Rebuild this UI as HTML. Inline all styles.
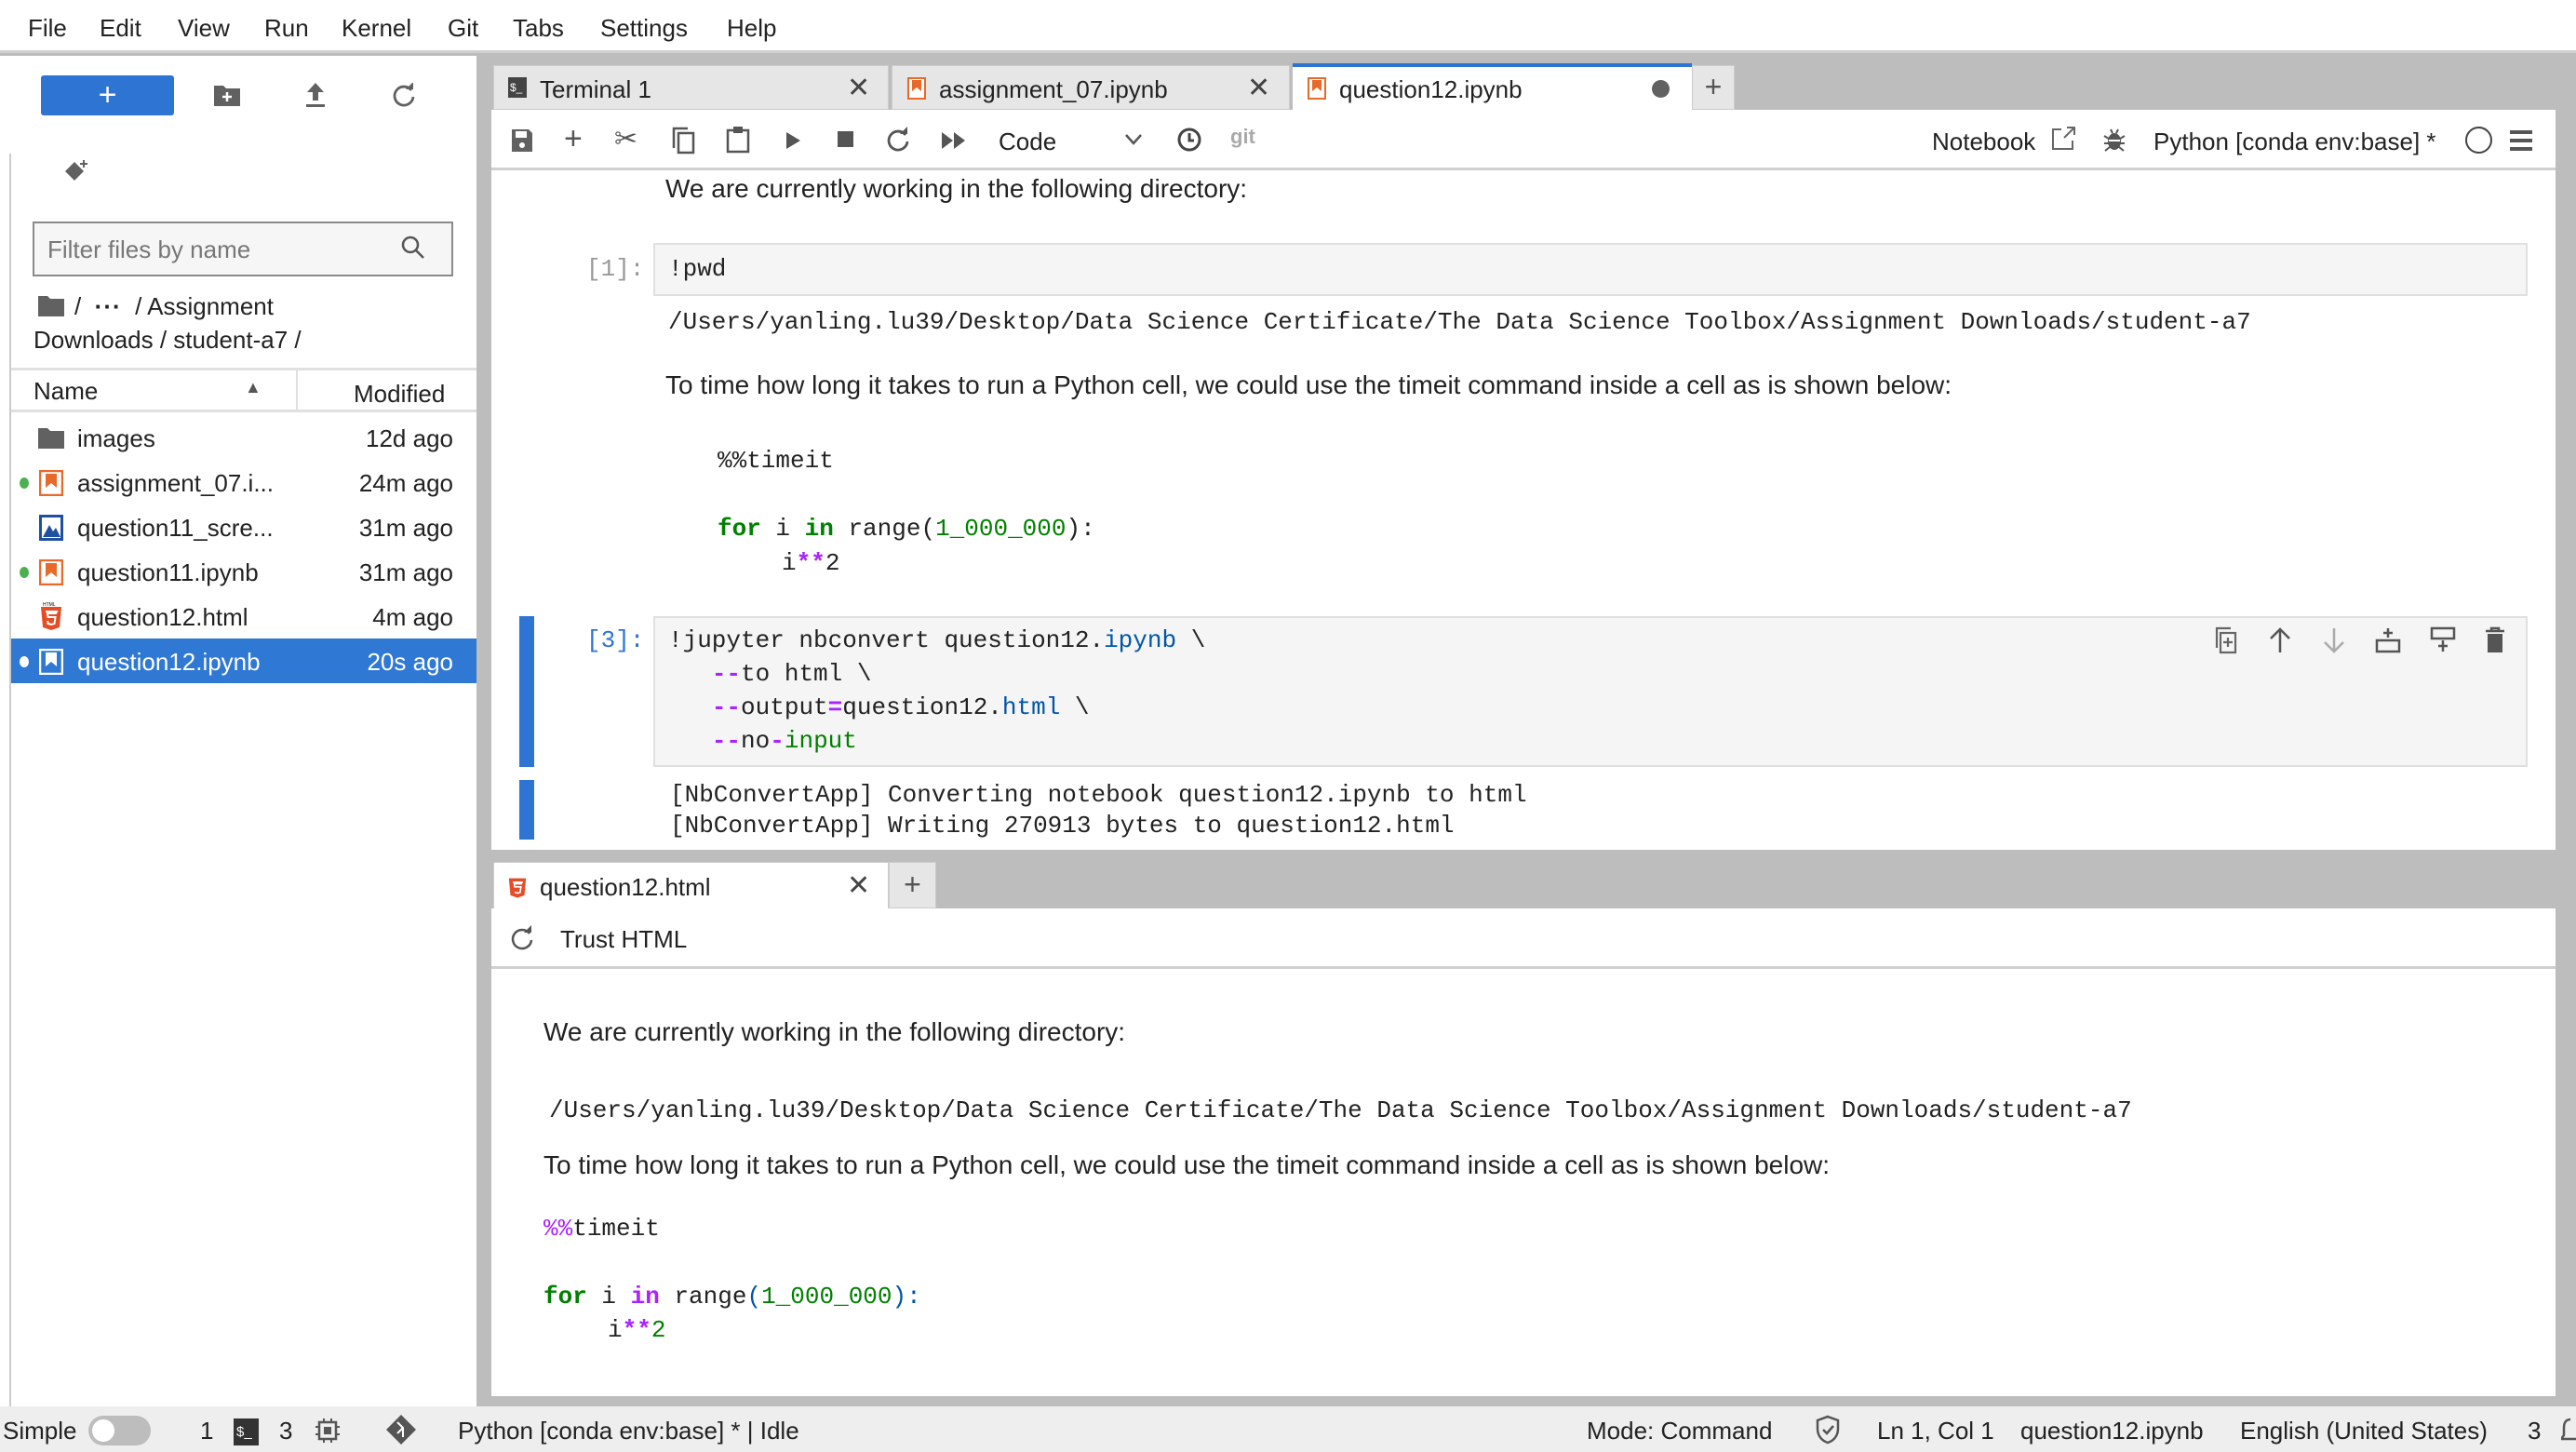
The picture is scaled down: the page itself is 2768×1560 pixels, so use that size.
<!DOCTYPE html>
<html><head><meta charset="utf-8"><style>
*{margin:0;padding:0;box-sizing:border-box}
body{width:2768px;height:1560px;position:relative;overflow:hidden;background:#bdbdbd;font-family:"Liberation Sans",sans-serif;font-size:26px;color:#222}
.a{position:absolute;white-space:nowrap}
.t{position:absolute;left:287px;width:200px;text-align:right;white-space:nowrap}
.m{font-family:"Liberation Mono",monospace;font-size:26px}
.kw{color:#008000;font-weight:bold}.op{color:#aa22ff;font-weight:bold}.nu{color:#008000}.bl{color:#0055aa}
.ic{position:absolute}
</style></head><body>
<!-- menubar -->
<div class="a" style="left:0;top:0;width:2768px;height:57px;background:#fff;border-bottom:3px solid #d0d0d0"></div>
<div class="a" style="left:30px;top:15px;word-spacing:0">File</div>
<div class="a" style="left:107px;top:15px">Edit</div>
<div class="a" style="left:191px;top:15px">View</div>
<div class="a" style="left:284px;top:15px">Run</div>
<div class="a" style="left:367px;top:15px">Kernel</div>
<div class="a" style="left:481px;top:15px">Git</div>
<div class="a" style="left:551px;top:15px">Tabs</div>
<div class="a" style="left:645px;top:15px">Settings</div>
<div class="a" style="left:781px;top:15px">Help</div>

<!-- sidebar -->
<div class="a" style="left:0;top:60px;width:512px;height:1451px;background:#fff"></div>
<div class="a" style="left:10px;top:165px;width:2px;height:1346px;background:#ccc"></div>
<div class="a" style="left:44px;top:81px;width:143px;height:43px;background:#2e74d2;border-radius:3px;color:#fff;font-size:34px;text-align:center;line-height:42px">+</div>
<svg class="ic" style="left:230px;top:90px" width="28" height="24" viewBox="0 0 28 24"><path d="M0 2h10l3 3h15v19H0z" fill="#616161"/><path d="M14 9v10M9 14h10" stroke="#fff" stroke-width="2.5"/></svg>
<svg class="ic" style="left:327px;top:88px" width="24" height="28" viewBox="0 0 24 28"><path d="M12 1L3 11h6v9h6v-9h6z M2 24h20v3H2z" fill="#616161"/></svg>
<svg class="ic" style="left:421px;top:89px" width="26" height="26" viewBox="0 0 26 26"><path d="M21 8A10 10 0 1 0 23 15" fill="none" stroke="#616161" stroke-width="2.8"/><path d="M15 7h8V-1z" fill="#616161"/></svg>
<svg class="ic" style="left:68px;top:170px" width="30" height="30" viewBox="0 0 30 30"><path d="M12 4l10 10-10 10L2 14z" fill="#616161"/><path d="M22 2v8M18 6h8" stroke="#616161" stroke-width="2"/></svg>
<div class="a" style="left:35px;top:238px;width:452px;height:59px;border:2px solid #8a8a8a;background:#f6f6f6"></div>
<div class="a" style="left:51px;top:253px;color:#777">Filter files by name</div>
<svg class="ic" style="left:429px;top:251px" width="30" height="30" viewBox="0 0 30 30"><circle cx="12" cy="12" r="8" fill="none" stroke="#555" stroke-width="2.5"/><path d="M18 18l8 8" stroke="#555" stroke-width="2.5"/></svg>
<svg class="ic" style="left:41px;top:316px" width="28" height="24" viewBox="0 0 28 24"><path d="M0 2h10l3 3h15v19H0z" fill="#616161"/></svg>
<div class="a" style="left:80px;top:314px">/ &nbsp;<b style="letter-spacing:1px">···</b> &nbsp;/ Assignment</div>
<div class="a" style="left:36px;top:350px">Downloads / student-a7 /</div>
<div class="a" style="left:12px;top:395px;width:500px;height:48px;border-top:3px solid #e0e0e0;border-bottom:3px solid #e0e0e0"></div>
<div class="a" style="left:318px;top:398px;width:2px;height:42px;background:#e0e0e0"></div>
<div class="a" style="left:36px;top:405px;font-weight:500">Name</div>
<div class="a" style="left:263px;top:406px;font-size:18px;color:#555">▲</div>
<div class="a" style="left:380px;top:408px">Modified</div>
<div class="a" style="left:12px;top:686px;width:500px;height:48px;background:#2f78d3"></div>
<!-- rows -->
<svg class="ic" style="left:41px;top:458px" width="28" height="24" viewBox="0 0 28 24"><path d="M0 2h10l3 3h15v19H0z" fill="#616161"/></svg>
<div class="a" style="left:83px;top:456px">images</div><div class="t" style="top:456px">12d ago</div>
<div class="a" style="left:21px;top:513px;width:10px;height:12px;border-radius:50%;background:#4caf50"></div>
<svg class="ic" style="left:42px;top:505px" width="26" height="28" viewBox="0 0 26 28"><rect x="1" y="1" width="24" height="26" fill="#fff" stroke="#e86a2a" stroke-width="2.5"/><path d="M7 4h12v15l-6-5-6 5z" fill="#e86a2a"/></svg>
<div class="a" style="left:83px;top:504px">assignment_07.i...</div><div class="t" style="top:504px">24m ago</div>
<svg class="ic" style="left:42px;top:553px" width="26" height="28" viewBox="0 0 26 28"><rect x="0" y="0" width="26" height="28" fill="#1f4fa0"/><rect x="3" y="3" width="20" height="22" fill="#fff"/><path d="M4 24l7-13 4 7 3-4 5 10z" fill="#1f4fa0"/></svg>
<div class="a" style="left:83px;top:552px">question11_scre...</div><div class="t" style="top:552px">31m ago</div>
<div class="a" style="left:21px;top:609px;width:10px;height:12px;border-radius:50%;background:#4caf50"></div>
<svg class="ic" style="left:42px;top:601px" width="26" height="28" viewBox="0 0 26 28"><rect x="1" y="1" width="24" height="26" fill="#fff" stroke="#e86a2a" stroke-width="2.5"/><path d="M7 4h12v15l-6-5-6 5z" fill="#e86a2a"/></svg>
<div class="a" style="left:83px;top:600px">question11.ipynb</div><div class="t" style="top:600px">31m ago</div>
<svg class="ic" style="left:43px;top:646px" width="24" height="32" viewBox="0 0 24 32"><path d="M1 6h22l-2 22-9 3-9-3z" fill="#e44d26"/><path d="M6 11h12l-1 2H8l.5 4h8l-1 7-3.5 1-3.5-1-.2-3" fill="none" stroke="#fff" stroke-width="2"/><text x="3" y="5" font-size="5" font-family="Liberation Sans">HTML</text></svg>
<div class="a" style="left:83px;top:648px">question12.html</div><div class="t" style="top:648px">4m ago</div>
<div class="a" style="left:21px;top:705px;width:10px;height:12px;border-radius:50%;background:#fff"></div>
<svg class="ic" style="left:42px;top:697px" width="26" height="28" viewBox="0 0 26 28"><rect x="1" y="1" width="24" height="26" fill="none" stroke="#fff" stroke-width="2.5"/><path d="M7 4h12v15l-6-5-6 5z" fill="#fff"/></svg>
<div class="a" style="left:83px;top:696px;color:#fff">question12.ipynb</div><div class="t" style="top:696px;color:#fff">20s ago</div>

<!-- main tabs -->
<div class="a" style="left:530px;top:70px;width:425px;height:48px;background:#e6e6e6;border:1px solid #ccc"></div>
<div class="a" style="left:958px;top:70px;width:428px;height:48px;background:#e6e6e6;border:1px solid #ccc"></div>
<div class="a" style="left:1389px;top:68px;width:429px;height:52px;background:#fff;border-top:4px solid #2e74d2"></div>
<div class="a" style="left:1818px;top:70px;width:46px;height:48px;background:#e6e6e6;border:1px solid #ccc;text-align:center;line-height:44px;font-size:32px;color:#555">+</div>
<div class="a" style="left:546px;top:83px;width:20px;height:22px;background:#444;color:#fff;font-size:12px;line-height:22px;padding-left:2px">$_</div>
<div class="a" style="left:580px;top:81px">Terminal 1</div>
<div class="a" style="left:910px;top:77px;font-size:30px;color:#444">✕</div>
<svg class="ic" style="left:975px;top:83px" width="20" height="24" viewBox="0 0 20 24"><rect x="1" y="1" width="18" height="22" fill="#fff" stroke="#e86a2a" stroke-width="2"/><path d="M5 3h10v12l-5-4-5 4z" fill="#e86a2a"/></svg>
<div class="a" style="left:1009px;top:81px">assignment_07.ipynb</div>
<div class="a" style="left:1340px;top:77px;font-size:30px;color:#444">✕</div>
<svg class="ic" style="left:1405px;top:83px" width="20" height="24" viewBox="0 0 20 24"><rect x="1" y="1" width="18" height="22" fill="#fff" stroke="#e86a2a" stroke-width="2"/><path d="M5 3h10v12l-5-4-5 4z" fill="#e86a2a"/></svg>
<div class="a" style="left:1439px;top:81px">question12.ipynb</div>
<div class="a" style="left:1775px;top:86px;width:19px;height:19px;border-radius:50%;background:#616161"></div>

<!-- notebook panel -->
<div class="a" style="left:528px;top:118px;width:2218px;height:795px;background:#fff"></div>
<div class="a" style="left:528px;top:180px;width:2218px;height:3px;background:#d0d0d0"></div>
<svg class="ic" style="left:548px;top:137px" width="26" height="28" viewBox="0 0 26 28"><path d="M2 2h18l4 4v20H2z" fill="#616161"/><rect x="6" y="4" width="12" height="7" fill="#fff"/><circle cx="13" cy="19" r="3" fill="#fff"/></svg>
<div class="a" style="left:606px;top:130px;font-size:34px;color:#555">+</div>
<div class="a" style="left:660px;top:132px;font-size:30px;color:#555">✂</div>
<svg class="ic" style="left:720px;top:136px" width="28" height="30" viewBox="0 0 28 30"><rect x="9" y="7" width="16" height="21" fill="none" stroke="#555" stroke-width="2.5"/><path d="M4 23V2h15" fill="none" stroke="#555" stroke-width="2.5"/></svg>
<svg class="ic" style="left:780px;top:135px" width="26" height="30" viewBox="0 0 26 30"><rect x="2" y="5" width="22" height="23" fill="none" stroke="#555" stroke-width="2.5"/><rect x="8" y="1" width="10" height="7" fill="#555"/></svg>
<svg class="ic" style="left:842px;top:140px" width="20" height="22"><path d="M3 2l15 9-15 9z" fill="#555"/></svg>
<div class="a" style="left:900px;top:141px;width:17px;height:17px;background:#555"></div>
<svg class="ic" style="left:952px;top:136px" width="26" height="28" viewBox="0 0 26 28"><path d="M21 9A10 10 0 1 0 23 16" fill="none" stroke="#555" stroke-width="2.8"/><path d="M15 8h8V0z" fill="#555"/></svg>
<svg class="ic" style="left:1010px;top:140px" width="30" height="22"><path d="M2 2l12 9-12 9zM15 2l12 9-12 9z" fill="#555"/></svg>
<div class="a" style="left:1073px;top:137px">Code</div>
<svg class="ic" style="left:1208px;top:143px" width="20" height="14"><path d="M2 2l8 9 8-9" fill="none" stroke="#555" stroke-width="2.5"/></svg>
<svg class="ic" style="left:1264px;top:135px" width="28" height="30" viewBox="0 0 28 30"><circle cx="14" cy="15" r="11" fill="none" stroke="#444" stroke-width="3"/><path d="M14 8v8h5" fill="none" stroke="#444" stroke-width="3"/></svg>
<div class="a" style="left:1322px;top:134px;font-size:22px;color:#aaa;font-weight:bold">git</div>
<div class="a" style="left:2076px;top:137px">Notebook</div>
<svg class="ic" style="left:2203px;top:135px" width="28" height="28" viewBox="0 0 28 28"><path d="M12 4H3v21h21v-9" fill="none" stroke="#666" stroke-width="2"/><path d="M15 13L26 2M18 2h8v8" fill="none" stroke="#666" stroke-width="2"/></svg>
<svg class="ic" style="left:2260px;top:136px" width="24" height="28" viewBox="0 0 24 28"><ellipse cx="12" cy="16" rx="7" ry="9" fill="#555"/><path d="M1 10l5 3M23 10l-5 3M1 18h5M23 18h-5M2 26l5-4M22 26l-5-4M8 3l2 4M16 3l-2 4" stroke="#555" stroke-width="2"/><path d="M6 15h12" stroke="#fff" stroke-width="2"/></svg>
<div class="a" style="left:2314px;top:137px">Python [conda env:base] *</div>
<div class="a" style="left:2649px;top:136px;width:29px;height:29px;border:2.5px solid #444;border-radius:50%"></div>
<svg class="ic" style="left:2697px;top:139px" width="24" height="24"><path d="M0 3h24M0 12h24M0 21h24" stroke="#555" stroke-width="4"/></svg>

<div class="a" style="left:715px;top:187px;font-size:28px">We are currently working in the following directory:</div>
<div class="a m" style="left:630px;top:274px;color:#999">[1]:</div>
<div class="a" style="left:702px;top:261px;width:2014px;height:57px;background:#f5f5f5;border:2px solid #e0e0e0"></div>
<div class="a m" style="left:718px;top:274px">!pwd</div>
<div class="a m" style="left:718px;top:331px">/Users/yanling.lu39/Desktop/Data Science Certificate/The Data Science Toolbox/Assignment Downloads/student-a7</div>
<div class="a" style="left:715px;top:398px;font-size:28px">To time how long it takes to run a Python cell, we could use the timeit command inside a cell as is shown below:</div>
<div class="a m" style="left:771px;top:480px">%%timeit</div>
<div class="a m" style="left:771px;top:553px"><span class="kw">for</span> i <span class="kw">in</span> range(<span class="nu">1_000_000</span>):</div>
<div class="a m" style="left:840px;top:590px">i<span class="op">**</span>2</div>

<div class="a" style="left:558px;top:662px;width:16px;height:162px;background:#2e74d2"></div>
<div class="a" style="left:558px;top:838px;width:16px;height:64px;background:#2e74d2"></div>
<div class="a m" style="left:630px;top:673px;color:#2e74d2">[3]:</div>
<div class="a" style="left:702px;top:662px;width:2014px;height:162px;background:#f5f5f5;border:2px solid #e0e0e0"></div>
<div class="a m" style="left:718px;top:673px">!jupyter nbconvert question12.<span class="bl">ipynb</span> \</div>
<div class="a m" style="left:718px;top:709px">&nbsp;&nbsp;&nbsp;<span class="op">--</span>to html \</div>
<div class="a m" style="left:718px;top:745px">&nbsp;&nbsp;&nbsp;<span class="op">--</span>output<span class="op">=</span>question12.<span class="bl">html</span> \</div>
<div class="a m" style="left:718px;top:781px">&nbsp;&nbsp;&nbsp;<span class="op">--</span>no<span class="op">-</span><span class="nu">input</span></div>
<svg class="ic" style="left:2378px;top:673px" width="28" height="30" viewBox="0 0 28 30"><rect x="8" y="7" width="16" height="21" fill="none" stroke="#666" stroke-width="2.2"/><path d="M4 23V2h15M16 12v10M11 17h10" fill="none" stroke="#666" stroke-width="2.2"/></svg>
<svg class="ic" style="left:2436px;top:673px" width="28" height="30"><path d="M14 28V3M4 13L14 3l10 10" fill="none" stroke="#555" stroke-width="2.5"/></svg>
<svg class="ic" style="left:2494px;top:673px" width="28" height="30"><path d="M14 2v25M4 17l10 10 10-10" fill="none" stroke="#aaa" stroke-width="2.5"/></svg>
<svg class="ic" style="left:2552px;top:673px" width="28" height="30"><path d="M14 2v10M9 7h10" stroke="#555" stroke-width="2.5"/><rect x="2" y="15" width="24" height="12" fill="none" stroke="#555" stroke-width="2.5"/></svg>
<svg class="ic" style="left:2611px;top:673px" width="28" height="30"><rect x="2" y="2" width="24" height="11" fill="none" stroke="#555" stroke-width="2.5"/><path d="M14 15v12M9 21h10" stroke="#555" stroke-width="2.5"/></svg>
<svg class="ic" style="left:2669px;top:673px" width="24" height="30"><path d="M2 5h20M8 5V2h8v3" stroke="#555" stroke-width="2.5" fill="none"/><path d="M4 8h16v20H4z" fill="#555"/></svg>
<div class="a m" style="left:720px;top:839px">[NbConvertApp] Converting notebook question12.ipynb to html</div>
<div class="a m" style="left:720px;top:872px">[NbConvertApp] Writing 270913 bytes to question12.html</div>

<!-- bottom panel -->
<div class="a" style="left:530px;top:926px;width:425px;height:51px;background:#fff;border:1px solid #ccc;border-bottom:none"></div>
<div class="a" style="left:955px;top:926px;width:51px;height:50px;background:#e6e6e6;border:1px solid #ccc;text-align:center;line-height:46px;font-size:32px;color:#555">+</div>
<svg class="ic" style="left:546px;top:938px" width="20" height="28" viewBox="0 0 24 32"><path d="M1 6h22l-2 22-9 3-9-3z" fill="#e44d26"/><path d="M6 11h12l-1 2H8l.5 4h8l-1 7-3.5 1-3.5-1" fill="none" stroke="#fff" stroke-width="2"/></svg>
<div class="a" style="left:580px;top:938px">question12.html</div>
<div class="a" style="left:910px;top:934px;font-size:30px;color:#444">✕</div>
<div class="a" style="left:528px;top:976px;width:2218px;height:524px;background:#fff"></div>
<div class="a" style="left:528px;top:1038px;width:2218px;height:3px;background:#d0d0d0"></div>
<svg class="ic" style="left:548px;top:994px" width="26" height="28" viewBox="0 0 26 28"><path d="M21 9A10 10 0 1 0 23 16" fill="none" stroke="#555" stroke-width="2.5"/><path d="M15 8h8V0z" fill="#555"/></svg>
<div class="a" style="left:602px;top:994px">Trust HTML</div>
<div class="a" style="left:584px;top:1093px;font-size:28px">We are currently working in the following directory:</div>
<div class="a m" style="left:590px;top:1178px">/Users/yanling.lu39/Desktop/Data Science Certificate/The Data Science Toolbox/Assignment Downloads/student-a7</div>
<div class="a" style="left:584px;top:1236px;font-size:28px">To time how long it takes to run a Python cell, we could use the timeit command inside a cell as is shown below:</div>
<div class="a m" style="left:584px;top:1305px"><span style="color:#aa22ff">%%</span>timeit</div>
<div class="a m" style="left:584px;top:1378px"><span class="kw">for</span> i <span class="op">in</span> range<span style="color:#0055aa">(</span><span class="nu">1_000_000</span><span style="color:#0055aa">):</span></div>
<div class="a m" style="left:653px;top:1414px">i<span class="op">**</span><span class="nu">2</span></div>

<!-- status bar -->
<div class="a" style="left:0;top:1511px;width:2768px;height:49px;background:#eeeeee"></div>
<div class="a" style="left:3px;top:1522px">Simple</div>
<div class="a" style="left:95px;top:1521px;width:67px;height:32px;border-radius:16px;background:#bdbdbd"></div>
<div class="a" style="left:99px;top:1525px;width:24px;height:24px;border-radius:50%;background:#fff"></div>
<div class="a" style="left:215px;top:1522px">1</div>
<div class="a" style="left:251px;top:1524px;width:27px;height:29px;background:#333;color:#fff;font-size:15px;line-height:30px;padding-left:3px">$_</div>
<div class="a" style="left:300px;top:1522px">3</div>
<svg class="ic" style="left:338px;top:1523px" width="28" height="28" viewBox="0 0 28 28"><rect x="5" y="5" width="18" height="18" fill="none" stroke="#555" stroke-width="2.5"/><rect x="10" y="10" width="8" height="8" fill="#555"/><path d="M10 1v4M18 1v4M10 23v4M18 23v4M1 10h4M1 18h4M23 10h4M23 18h4" stroke="#555" stroke-width="2"/></svg>
<svg class="ic" style="left:414px;top:1519px" width="34" height="34" viewBox="0 0 34 34"><path d="M17 1l16 16-16 16L1 17z" fill="#555"/><path d="M13 9l6 6v10M19 15l-6 6" stroke="#fff" stroke-width="2" fill="none"/></svg>
<div class="a" style="left:492px;top:1522px">Python [conda env:base] * | Idle</div>
<div class="a" style="left:1705px;top:1522px">Mode: Command</div>
<svg class="ic" style="left:1950px;top:1520px" width="28" height="32" viewBox="0 0 28 32"><path d="M14 2l11 4v9c0 8-5 13-11 15C8 28 3 23 3 15V6z" fill="none" stroke="#555" stroke-width="2.5"/><path d="M9 16l4 4 7-8" fill="none" stroke="#555" stroke-width="2.5"/></svg>
<div class="a" style="left:2017px;top:1522px">Ln 1, Col 1</div>
<div class="a" style="left:2171px;top:1522px">question12.ipynb</div>
<div class="a" style="left:2407px;top:1522px">English (United States)</div>
<div class="a" style="left:2716px;top:1522px">3</div>
<svg class="ic" style="left:2752px;top:1522px" width="20" height="30"><path d="M10 3c-5 0-7 4-7 9v8l-3 4h20" fill="none" stroke="#555" stroke-width="2.5"/></svg>
</body></html>
